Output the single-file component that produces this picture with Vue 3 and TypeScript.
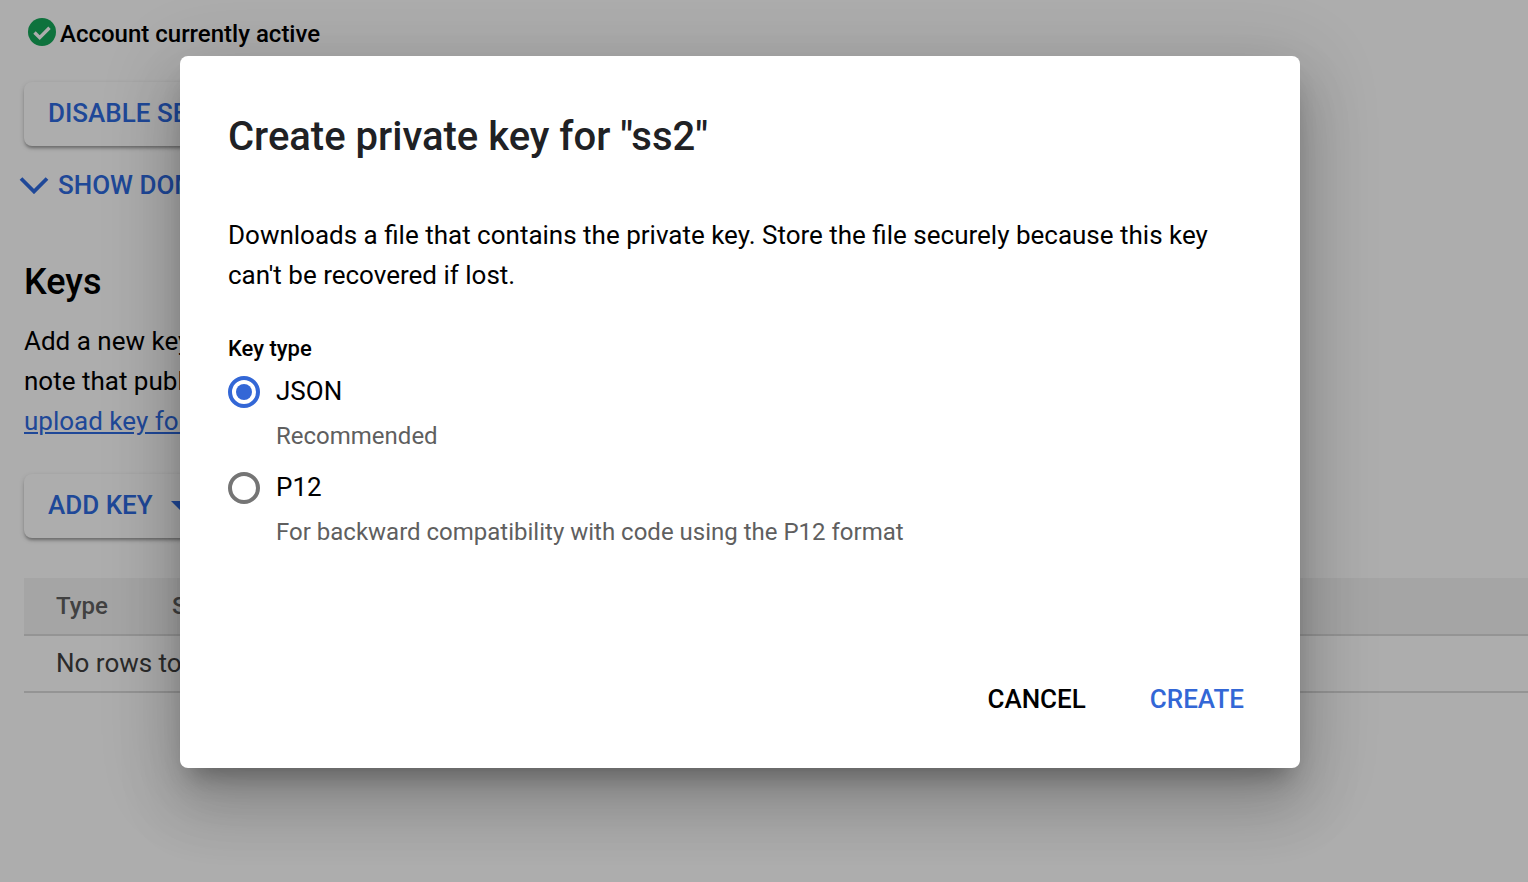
<template>
  <div class="page">
    <div class="status-line">
      <svg class="status-icon" viewBox="0 0 28 28" width="28" height="28">
        <circle cx="14" cy="14" r="14" fill="#15a85a" />
        <path d="M6.5 14.5l5.2 5.2L21.5 9.8" fill="none" stroke="#fff" stroke-width="3.4" />
      </svg>
      <span>Account currently active</span>
    </div>

    <button class="raised-btn disable-btn">DISABLE SERVICE ACCOUNT</button>

    <div class="show-toggle">
      <svg viewBox="0 0 30 18" width="30" height="18">
        <path d="M2 2.5l13 13 13-13" fill="none" stroke-width="3.8" />
      </svg>
      <span>SHOW DOMAIN-WIDE DELEGATION</span>
    </div>

    <h2 class="keys-title">Keys</h2>
    <p class="keys-text">
      Add a new key pair or upload a public key<br />
      note that public keys must be in RSA format<br />
      <a class="keys-link">upload key formats</a>
    </p>

    <button class="raised-btn add-btn">
      ADD KEY
      <span class="caret"></span>
    </button>

    <div class="table">
      <div class="table-head">
        <span class="col-type">Type</span>
        <span>Status</span>
      </div>
      <div class="table-row">No rows to display</div>
    </div>

    <div class="overlay"></div>

    <section class="dialog">
      <h1 class="dialog-title">Create private key for "ss2"</h1>
      <p class="dialog-text">
        Downloads a file that contains the private key. Store the file securely because this key can't be recovered if lost.
      </p>
      <div class="field-label">Key type</div>

      <div v-for="opt in options" :key="opt.name" class="option">
        <div class="option-row">
          <span class="radio" :class="{ checked: opt.name === selected }"></span>
          <span class="option-name">{{ opt.name }}</span>
        </div>
        <div class="option-hint">{{ opt.hint }}</div>
      </div>

      <div class="actions">
        <button class="text-btn">CANCEL</button>
        <button class="text-btn primary">CREATE</button>
      </div>
    </section>
  </div>
</template>

<script setup lang="ts">
import { ref } from 'vue';

interface KeyOption {
  name: string;
  hint: string;
}

const selected = ref('JSON');

const options: KeyOption[] = [
  { name: 'JSON', hint: 'Recommended' },
  { name: 'P12', hint: 'For backward compatibility with code using the P12 format' }
];
</script>

<style>
html,
body {
  margin: 0;
  overflow: hidden;
}
</style>

<style scoped>
.page {
  position: relative;
  height: 882px;
  padding: 18px 0 0 24px;
  box-sizing: border-box;
  overflow: hidden;
  background: #fff;
  color: #000;
  font-family: Roboto, "Liberation Sans", sans-serif;
}

.status-line {
  display: flex;
  align-items: center;
  gap: 4px;
  height: 32px;
  padding-left: 4px;
  font-size: 24px;
  font-weight: 500;
}

.status-icon {
  margin-top: -4px;
}

.raised-btn {
  display: block;
  height: 64px;
  padding: 0 24px 2px;
  border: 0;
  border-radius: 8px;
  background: #fff;
  color: #2f6ae0;
  font-family: inherit;
  font-size: 26px;
  font-weight: 500;
  white-space: nowrap;
  box-shadow: 0 3px 3px -1px rgba(0, 0, 0, 0.25), 0 2px 5px rgba(0, 0, 0, 0.2);
}

.disable-btn {
  margin-top: 32px;
  width: 380px;
  text-align: left;
}

.show-toggle {
  display: flex;
  align-items: center;
  gap: 9px;
  margin: 19px 0 0 -5px;
  height: 40px;
  color: #2f6ae0;
  font-size: 26px;
  font-weight: 500;
  white-space: nowrap;
}

.show-toggle svg path {
  stroke: #2f6ae0;
}

.keys-title {
  margin: 55px 0 0;
  font-size: 36px;
  line-height: 44px;
  font-weight: 500;
}

.keys-text {
  margin: 17px 0 0;
  font-size: 26px;
  line-height: 40px;
  white-space: nowrap;
}

.keys-link {
  color: #2f6ae0;
  text-decoration: underline;
}

.add-btn {
  margin-top: 33px;
  width: 210px;
  text-align: left;
}

.caret {
  display: inline-block;
  margin-left: 12px;
  vertical-align: 3px;
  border-left: 10px solid transparent;
  border-right: 10px solid transparent;
  border-top: 10px solid #2f6ae0;
}

.table {
  margin-top: 40px;
  font-size: 26px;
}

.table-head {
  display: flex;
  align-items: center;
  height: 56px;
  padding-left: 32px;
  background: #f3f3f3;
  border-bottom: 2px solid #dadada;
  color: #606060;
  font-weight: 500;
  font-size: 24px;
}

.col-type {
  width: 116px;
}

.table-row {
  height: 55px;
  line-height: 55px;
  padding-left: 32px;
  border-bottom: 2px solid #dadada;
  color: #404040;
}

.overlay {
  position: absolute;
  inset: 0;
  background: rgba(0, 0, 0, 0.32);
}

.dialog {
  position: absolute;
  left: 180px;
  top: 56px;
  width: 1120px;
  height: 712px;
  padding: 49px 48px 48px;
  box-sizing: border-box;
  background: #fff;
  border-radius: 8px;
  box-shadow: 0 18px 24px -11px rgba(0, 0, 0, 0.3), 0 38px 60px 5px rgba(0, 0, 0, 0.14), 0 14px 74px 13px rgba(0, 0, 0, 0.12);
}

.dialog-title {
  margin: 0;
  font-size: 40px;
  line-height: 64px;
  font-weight: 500;
  color: #202124;
}

.dialog-text {
  margin: 46px 0 0;
  font-size: 26px;
  line-height: 40px;
}

.field-label {
  margin-top: 38px;
  font-size: 22px;
  line-height: 32px;
  font-weight: 500;
}

.option {
  height: 96px;
  padding-top: 7px;
  box-sizing: border-box;
}

.option-row {
  display: flex;
  align-items: center;
  gap: 16px;
  height: 40px;
}

.radio {
  position: relative;
  width: 32px;
  height: 32px;
  box-sizing: border-box;
  border: 4px solid #757575;
  border-radius: 50%;
}

.radio.checked {
  border-color: #3367d6;
}

.radio.checked::after {
  content: "";
  position: absolute;
  left: 4px;
  top: 4px;
  width: 16px;
  height: 16px;
  border-radius: 50%;
  background: #3367d6;
}

.option-name {
  margin-bottom: 2px;
  font-size: 26px;
}

.option-hint {
  margin: 8px 0 0 48px;
  font-size: 24px;
  line-height: 32px;
  color: #5f5f5f;
}

.actions {
  position: absolute;
  right: 24px;
  bottom: 37px;
  display: flex;
}

.text-btn {
  height: 64px;
  padding: 0 32px;
  border: 0;
  background: none;
  color: #000;
  font-family: inherit;
  font-size: 26px;
  font-weight: 500;
}

.text-btn.primary {
  color: #3367d6;
}
</style>
